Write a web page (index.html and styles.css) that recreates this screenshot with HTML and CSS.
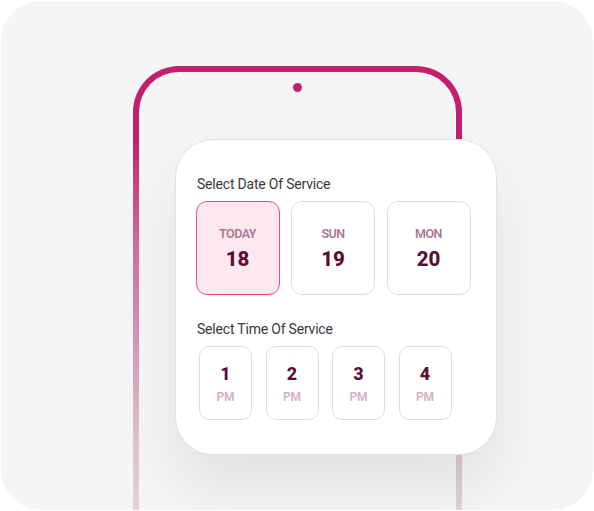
FILE: index.html
```html
<!DOCTYPE html>
<html lang="en">
<head>
    <meta charset="UTF-8">
    <meta name="viewport" content="width=device-width, initial-scale=1.0">
    <title>Select Service</title>
    <link rel="stylesheet" href="styles.css">
</head>
<body>

    <div class="frame">
        <!-- Phone outline -->
        <div class="phone">
            <div class="screen">
                <span class="camera"></span>

                <!-- Booking card -->
                <div class="card">
                    <h3 class="card-title">Select Date Of Service</h3>
                    <div class="date-row">
                        <div class="date-box active">
                            <span class="day">TODAY</span>
                            <span class="num">18</span>
                        </div>
                        <div class="date-box">
                            <span class="day">SUN</span>
                            <span class="num">19</span>
                        </div>
                        <div class="date-box">
                            <span class="day">MON</span>
                            <span class="num">20</span>
                        </div>
                    </div>

                    <h3 class="card-title second">Select Time Of Service</h3>
                    <div class="time-row">
                        <div class="time-box"><span class="hour">1</span><span class="pm">PM</span></div>
                        <div class="time-box"><span class="hour">2</span><span class="pm">PM</span></div>
                        <div class="time-box"><span class="hour">3</span><span class="pm">PM</span></div>
                        <div class="time-box"><span class="hour">4</span><span class="pm">PM</span></div>
                    </div>
                </div>
            </div>
        </div>
    </div>

</body>
</html>
```

FILE: styles.css
```css
body {
    margin: 0;
    padding: 0;
    background-color: #ffffff;
    font-family: Roboto, "Liberation Sans", sans-serif;
}

.frame {
    width: 592px;
    height: 509px;
    margin: 1px;
    background-color: #f5f5f5;
    border-radius: 40px;
    overflow: hidden;
}

.phone {
    width: 329px;
    height: 500px;
    margin-left: 132px;
    margin-top: 65px;
    padding: 6px 6px 0 6px;
    box-sizing: border-box;
    border-radius: 46px 46px 0 0;
    background: linear-gradient(#c41f6e 0, #c41f6e 14%, #cf6b9a 35%, #dcc3d0 75%, #e6dde2 100%);
}

.screen {
    height: 100%;
    background-color: #f5f5f5;
    border-radius: 40px 40px 0 0;
    display: flex;
    flex-direction: column;
}

.camera {
    width: 9px;
    height: 9px;
    border-radius: 50%;
    background-color: #c41f6e;
    margin-top: 11px;
    align-self: center;
}

.card {
    width: 322px;
    height: 316px;
    box-sizing: border-box;
    margin-top: 47px;
    margin-left: 36px;
    padding: 35px 20px 0 19.5px;
    background-color: #ffffff;
    border: 1.5px solid #e2e0e1;
    border-radius: 38px;
    box-shadow: 0 34px 60px rgba(0, 0, 0, 0.08);
}

.card-title {
    margin: 0 0 0 1.5px;
    font-size: 14px;
    line-height: 18px;
    font-weight: 400;
    color: #3b383a;
    letter-spacing: -0.2px;
}

.card-title.second {
    margin-top: 25px;
}

.date-row {
    display: flex;
    gap: 11.5px;
    margin-top: 8px;
}

.date-box {
    width: 84px;
    height: 94px;
    box-sizing: border-box;
    border: 1.5px solid #e0dcde;
    border-radius: 11px;
    display: flex;
    flex-direction: column;
    align-items: center;
    justify-content: center;
    gap: 5px;
}

.date-box.active {
    background-color: #fde8ee;
    border-color: #f24a7a;
}

.day {
    font-size: 12.5px;
    line-height: 16px;
    font-weight: 600;
    color: #a87893;
    letter-spacing: -0.5px;
}

.num {
    font-size: 20.5px;
    line-height: 24px;
    font-weight: 800;
    color: #5a0e36;
}

.time-row {
    display: flex;
    gap: 13.5px;
    margin-top: 8px;
    margin-left: 3.5px;
}

.time-box {
    width: 53px;
    height: 74px;
    box-sizing: border-box;
    border: 1.5px solid #e0dcde;
    border-radius: 10px;
    display: flex;
    flex-direction: column;
    align-items: center;
    justify-content: center;
    gap: 5px;
}

.hour {
    font-size: 18px;
    line-height: 22px;
    font-weight: 800;
    color: #5a0e36;
}

.pm {
    font-size: 12px;
    line-height: 14px;
    font-weight: 600;
    color: #d3aec2;
}
```
